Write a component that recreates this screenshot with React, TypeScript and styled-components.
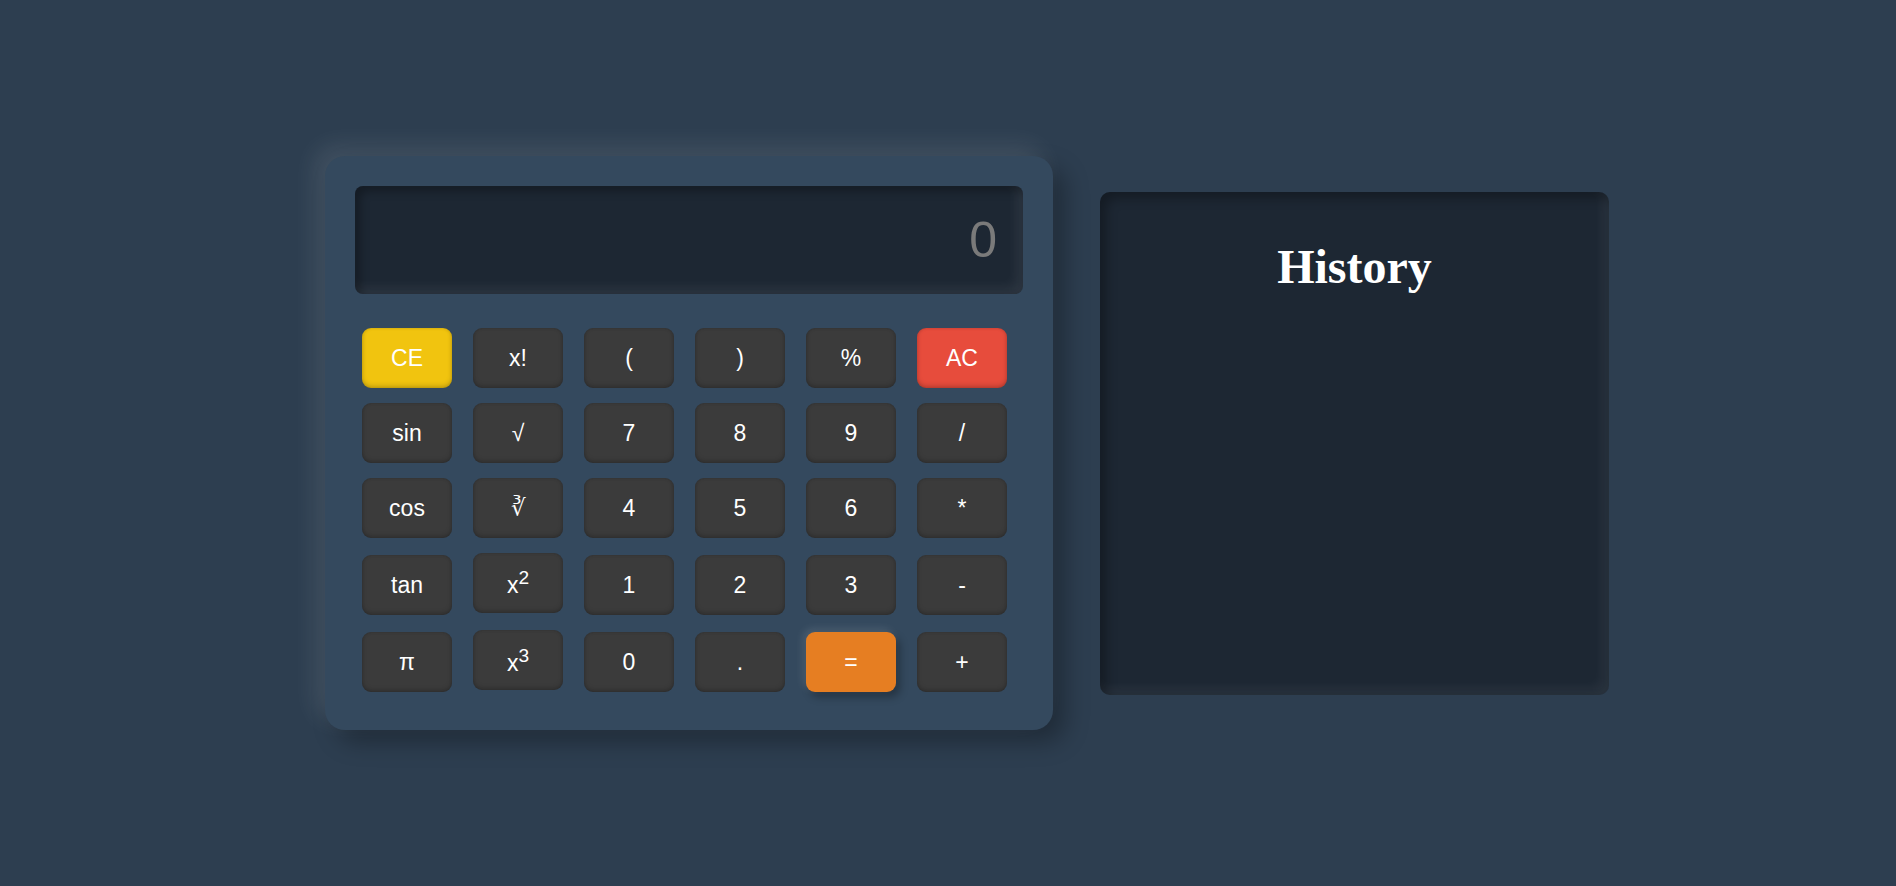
import React from "react";
import styled, { createGlobalStyle, css } from "styled-components";

const GlobalStyle = createGlobalStyle`
  html, body {
    margin: 0;
    padding: 0;
    background: #2d3e50;
    font-family: "Liberation Sans", Arial, sans-serif;
  }
`;

const Page = styled.div`
  min-height: 100vh;
  box-sizing: border-box;
  padding-left: 38px;
  display: flex;
  align-items: center;
  justify-content: center;
  gap: 47px;
`;

const Calculator = styled.div`
  width: 728px;
  box-sizing: border-box;
  padding: 30px 30px 38px;
  background: #34495e;
  border-radius: 20px;
  box-shadow: -10px -10px 25px rgba(255, 255, 255, 0.1),
    12px 12px 25px rgba(0, 0, 0, 0.3);
`;

const Display = styled.div`
  height: 108px;
  box-sizing: border-box;
  padding: 0 26px;
  display: flex;
  align-items: center;
  justify-content: flex-end;
  background: #1d2733;
  border-radius: 8px;
  box-shadow: inset 5px 5px 10px rgba(0, 0, 0, 0.3),
    inset -6px -6px 12px rgba(255, 255, 255, 0.07);
  color: #7a7a7a;
  font-size: 50px;
`;

const Keypad = styled.div`
  margin-top: 34px;
  padding-left: 7px;
  display: grid;
  grid-template-columns: repeat(6, 90px);
  column-gap: 21px;
  row-gap: 15px;
  align-items: baseline;
`;

type Tone = "plain" | "yellow" | "red" | "orange";

const tones: Record<Tone, string> = {
  plain: "#3b3b3b",
  yellow: "#f1c40f",
  red: "#e74c3c",
  orange: "#e67e22",
};

const Key = styled.button<{ $tone: Tone }>`
  width: 90px;
  height: 60px;
  padding: 1px 0 0;
  border: none;
  border-radius: 9px;
  background: ${(p) => tones[p.$tone]};
  color: #ffffff;
  font-family: "Liberation Sans", Arial, sans-serif;
  font-size: 23px;
  cursor: pointer;
  box-shadow: inset 0 -2px 5px rgba(0, 0, 0, 0.2),
    inset 0 0 3px rgba(0, 0, 0, 0.12);
  ${(p) =>
    p.$tone === "orange" &&
    css`
      box-shadow: -3px -3px 8px rgba(255, 255, 255, 0.12),
        4px 5px 9px rgba(0, 0, 0, 0.3);
    `}
`;

const History = styled.div`
  width: 509px;
  height: 503px;
  box-sizing: border-box;
  padding-top: 47px;
  background: #1d2733;
  border-radius: 10px;
  box-shadow: inset 6px 6px 12px rgba(0, 0, 0, 0.3),
    inset -6px -6px 12px rgba(255, 255, 255, 0.06);
`;

const HistoryTitle = styled.h1`
  margin: 0;
  text-align: center;
  color: #ffffff;
  font-family: "Liberation Serif", "Times New Roman", serif;
  font-weight: 700;
  font-size: 48px;
`;

type KeyDef = { label: React.ReactNode; tone?: Tone };

const keys: KeyDef[] = [
  { label: "CE", tone: "yellow" },
  { label: "x!" },
  { label: "(" },
  { label: ")" },
  { label: "%" },
  { label: "AC", tone: "red" },
  { label: "sin" },
  { label: "√" },
  { label: "7" },
  { label: "8" },
  { label: "9" },
  { label: "/" },
  { label: "cos" },
  { label: "∛" },
  { label: "4" },
  { label: "5" },
  { label: "6" },
  { label: "*" },
  { label: "tan" },
  {
    label: (
      <>
        x<sup>2</sup>
      </>
    ),
  },
  { label: "1" },
  { label: "2" },
  { label: "3" },
  { label: "-" },
  { label: "π" },
  {
    label: (
      <>
        x<sup>3</sup>
      </>
    ),
  },
  { label: "0" },
  { label: "." },
  { label: "=", tone: "orange" },
  { label: "+" },
];

export default function App() {
  return (
    <>
      <GlobalStyle />
      <Page>
        <Calculator>
          <Display>0</Display>
          <Keypad>
            {keys.map((k, i) => (
              <Key key={i} $tone={k.tone ?? "plain"}>
                {k.label}
              </Key>
            ))}
          </Keypad>
        </Calculator>

        <History>
          <HistoryTitle>History</HistoryTitle>
        </History>
      </Page>
    </>
  );
}
